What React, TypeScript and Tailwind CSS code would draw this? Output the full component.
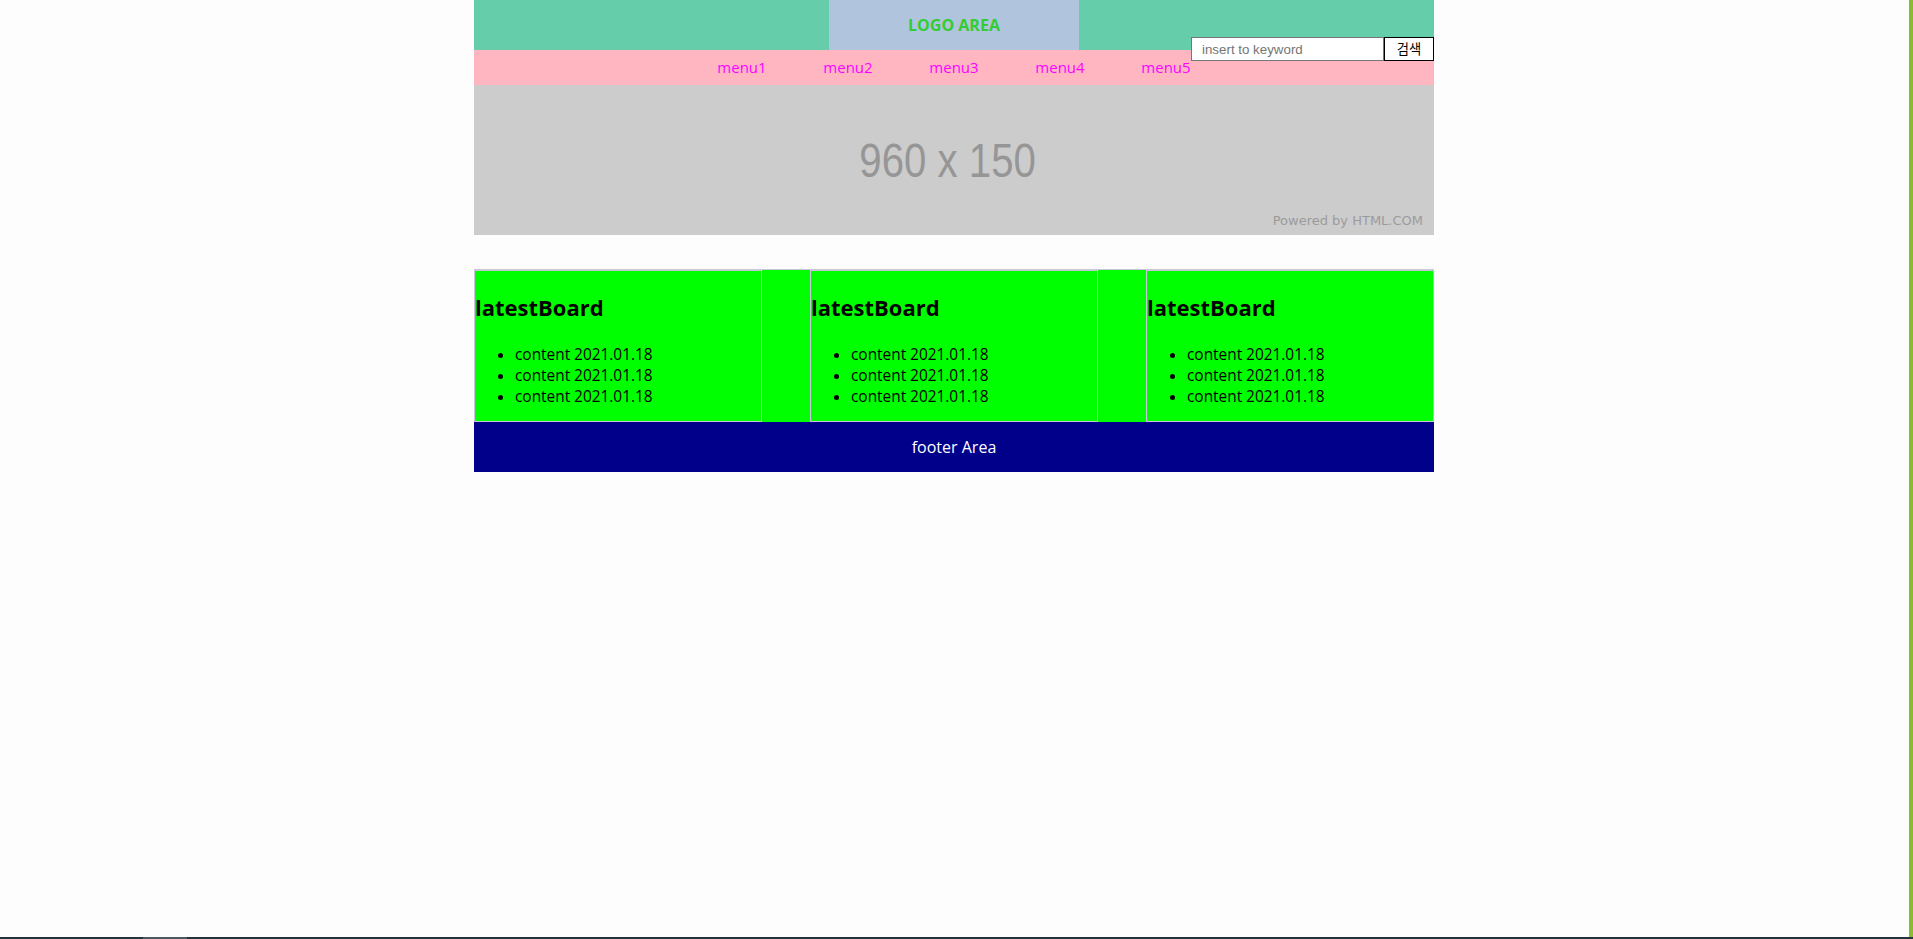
const MENUS = ["menu1", "menu2", "menu3", "menu4", "menu5"];
const ITEMS = ["content 2021.01.18", "content 2021.01.18", "content 2021.01.18"];

function Board() {
  return (
    <div className="w-[288px] h-full border border-[#c6c6d6] flex flex-col">
      <h2 className="mt-[20px] text-[22px] leading-[32px] font-bold text-black">latestBoard</h2>
      <ul className="mt-[21px] pl-[40px] list-disc text-[15.4px] leading-[21px] text-black">
        {ITEMS.map((t, i) => (
          <li key={i}>{t}</li>
        ))}
      </ul>
    </div>
  );
}

export default function App() {
  return (
    <div className="h-[939px] w-full flex flex-col overflow-hidden" style={{ fontFamily: '"Open Sans", "Noto Sans CJK KR", sans-serif' }}>
      <div className="flex-1 flex min-h-0">
        <div className="flex-1 bg-[#fdfdfd] pr-[1px]">
          <div className="relative w-[960px] mx-auto">
            {/* header */}
            <div className="h-[50px] bg-[#66cdaa] flex justify-center">
              <div className="w-[250px] h-full bg-[#b0c4de] flex items-center justify-center">
                <span className="text-[16px] font-bold text-[#32cd32]">LOGO AREA</span>
              </div>
            </div>

            {/* nav */}
            <div className="h-[35px] bg-[#ffb6c1] flex justify-center items-center">
              {MENUS.map((m) => (
                <span key={m} className="w-[106px] text-center text-[15px] text-[#ff00ff]">
                  {m}
                </span>
              ))}
            </div>

            {/* search */}
            <div className="absolute top-[37px] right-0 flex">
              <input
                type="text"
                placeholder="insert to keyword"
                className="w-[193px] h-[24px] border border-[#767676] bg-white px-[10px] text-[13.33px] placeholder:text-[#757575] outline-none"
                style={{ fontFamily: '"Liberation Sans", Arial, sans-serif' }}
              />
              <button
                type="button"
                className="w-[50px] h-[24px] border border-black bg-white text-[13.33px] text-black"
                style={{ fontFamily: '"Noto Sans CJK KR", sans-serif' }}
              >
                검색
              </button>
            </div>

            {/* banner */}
            <div className="h-[150px] bg-[#cccccc] flex flex-col">
              <div className="flex-1 flex items-center justify-center pt-[23px] pr-[12px]">
                <span
                  className="text-[49px] leading-none text-[#969696] scale-x-[0.82]"
                  style={{ fontFamily: '"Liberation Sans", Arial, sans-serif' }}
                >
                  960 x 150
                </span>
              </div>
              <div
                className="text-right pr-[11px] pb-[6px] text-[13px] leading-[16px] text-[#9b9b9b]"
                style={{ fontFamily: '"DejaVu Sans", sans-serif' }}
              >
                Powered by HTML.COM
              </div>
            </div>

            {/* boards */}
            <div className="mt-[34px] h-[153px] bg-[#00ff00] border-t border-[#c6c6d6] flex gap-[48px]">
              <Board />
              <Board />
              <Board />
            </div>

            {/* footer */}
            <div className="h-[50px] bg-[#00008b] flex items-center justify-center text-[16px] text-white">
              footer Area
            </div>
          </div>
        </div>
        <div className="w-[4px] bg-[#8abb2c]" />
      </div>
      <div className="h-[2px] flex">
        <div className="w-[143px] bg-[#22343e]" />
        <div className="w-[44px] bg-[#4a5a63]" />
        <div className="flex-1 bg-[#22343e]" />
      </div>
    </div>
  );
}
